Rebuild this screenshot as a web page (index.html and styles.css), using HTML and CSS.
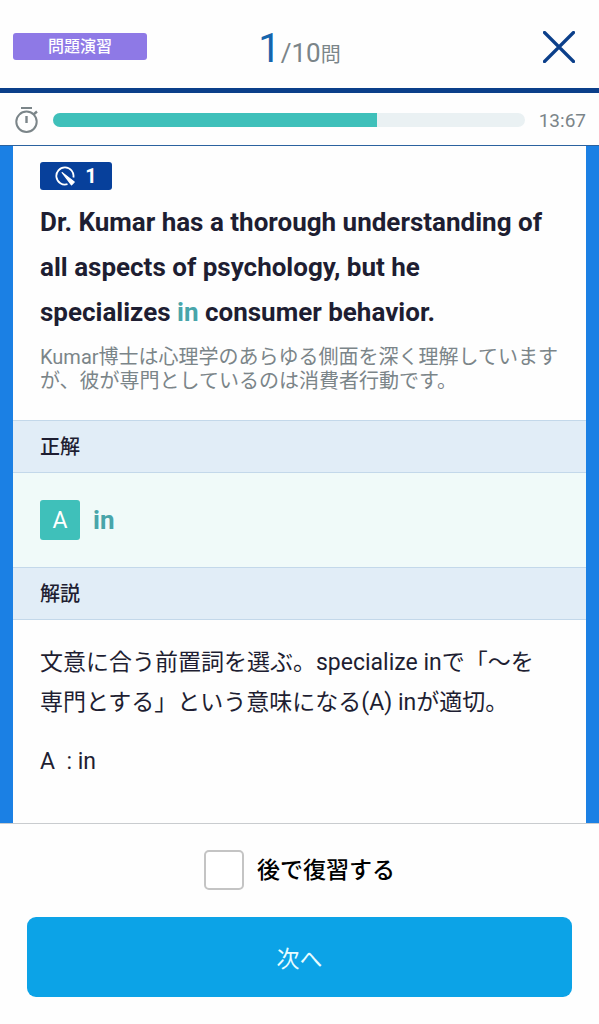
FILE: index.html
```html
<!DOCTYPE html>
<html lang="ja">

<head>
    <meta charset="UTF-8">
    <meta name="viewport" content="width=device-width, initial-scale=1.0">
    <title>問題演習</title>
    <link rel="stylesheet" href="styles.css">
</head>

<body>
    <header class="quiz-header">
        <span class="mode-label">問題演習</span>
        <p class="question-count"><span class="current">1</span>/10<span class="unit">問</span></p>
        <button type="button" class="close-btn" aria-label="閉じる">
            <svg viewBox="0 0 32 32" width="32" height="32">
                <path d="M1.5 1.5L30.5 30.5M30.5 1.5L1.5 30.5" fill="none" stroke="#0b3f8a" stroke-width="3.2" stroke-linecap="round" />
            </svg>
        </button>
    </header>

    <div class="timer">
        <svg class="timer-icon" viewBox="0 0 24 28" width="24" height="28" fill="none" stroke="#7b8589">
            <circle cx="11.5" cy="15.8" r="10.2" stroke-width="2" />
            <path d="M6 2H17" stroke-width="2" />
            <path d="M18.5 8.5L22 5.5" stroke-width="2.4" />
            <path d="M11.5 10V17" stroke-width="2.4" />
        </svg>
        <div class="timer-bar">
            <div class="timer-fill" style="width: 68.6%"></div>
        </div>
        <span class="timer-text">13:67</span>
    </div>

    <main class="quiz-main">
        <section class="question">
            <div class="question-number">
                <svg viewBox="0 0 20 20" width="20" height="20" fill="none" stroke="#fff">
                    <path d="M12.5 18.2A8.6 8.6 0 1 1 18.4 11.5" stroke-width="1.8" />
                    <path d="M7.2 6.6L19.2 16L16.5 18.9Z" fill="#fff" stroke-width="1.2" stroke-linejoin="round" />
                </svg>
                <span>1</span>
            </div>
            <h1 class="question-text">Dr. Kumar has a thorough understanding of all aspects of psychology, but he specializes <span class="highlight">in</span> consumer behavior.</h1>
            <p class="translation">Kumar博士は心理学のあらゆる側面を深く理解していますが、彼が専門としているのは消費者行動です。</p>
        </section>

        <h2 class="section-title">正解</h2>
        <div class="answer">
            <span class="answer-mark">A</span>
            <span class="answer-text">in</span>
        </div>

        <h2 class="section-title">解説</h2>
        <section class="explanation">
            <p>文意に合う前置詞を選ぶ。specialize inで「～を専門とする」という意味になる(A) inが適切。</p>
            <p>A &nbsp;: in</p>
        </section>
    </main>

    <footer class="quiz-footer">
        <label class="review-later">
            <input type="checkbox">
            <span>後で復習する</span>
        </label>
        <button type="button" class="next-btn">次へ</button>
    </footer>
</body>

</html>
```
FILE: styles.css
```css
* {
    box-sizing: border-box;
}

body {
    margin: 0;
    min-height: 100vh;
    display: flex;
    flex-direction: column;
    background: #fefefe;
    color: #1e1e32;
    font-family: Roboto, "Noto Sans CJK JP", sans-serif;
}

h1,
h2,
p {
    margin: 0;
}

/* Header */

.quiz-header {
    display: grid;
    grid-template-columns: 1fr auto 1fr;
    align-items: center;
    height: 93px;
    padding: 5px 13px 0;
    border-bottom: 5px solid #0b3f8a;
}

.mode-label {
    width: 134px;
    height: 27px;
    border-radius: 3px;
    background: #8e79e6;
    color: #fff;
    font-size: 16px;
    font-weight: 500;
    line-height: 27px;
    text-align: center;
}

.question-count {
    padding-top: 10px;
    color: #7b8589;
    font-size: 26px;
    line-height: 48px;
}

.question-count .current {
    color: #1565ad;
    font-size: 40px;
}

.question-count .unit {
    font-size: 20px;
}

.close-btn {
    justify-self: end;
    display: flex;
    margin-right: 11px;
    padding: 0;
    border: none;
    background: none;
    cursor: pointer;
}

/* Timer */

.timer {
    display: flex;
    align-items: center;
    gap: 14px;
    height: 53px;
    padding: 2px 13px 0 15px;
    border-bottom: 1px solid #2b629f;
}

.timer-bar {
    flex: 1;
    height: 14px;
    border-radius: 7px;
    background: #eaf1f3;
    overflow: hidden;
}

.timer-fill {
    height: 100%;
    background: #3fc0ba;
}

.timer-text {
    color: #7b8589;
    font-size: 19px;
}

/* Question card */

.quiz-main {
    flex: 1;
    border: solid #1b80e4;
    border-width: 0 13px;
}

.question {
    padding: 16px 27px 27px;
}

.question-number {
    display: flex;
    align-items: center;
    justify-content: center;
    gap: 10px;
    width: 72px;
    height: 28px;
    border-radius: 3px;
    background: #07409b;
    color: #fff;
    font-size: 20px;
    font-weight: 700;
}

.question-text {
    margin: 10px 0;
    padding-right: 8px;
    font-size: 26px;
    font-weight: 700;
    line-height: 45px;
}

.highlight {
    color: #48a5aa;
}

.translation {
    color: #7b8589;
    font-size: 20px;
    line-height: 24px;
}

.section-title {
    padding: 2px 27px 0;
    border: solid #c3d8ea;
    border-width: 1px 0;
    background: #e1edf7;
    font-size: 20px;
    font-weight: 500;
    line-height: 49px;
}

.answer {
    display: flex;
    align-items: center;
    gap: 13px;
    padding: 27px;
    background: #f0faf9;
}

.answer-mark {
    width: 40px;
    height: 40px;
    border-radius: 3px;
    background: #3fc0ba;
    color: #fff;
    font-size: 23px;
    line-height: 42px;
    text-align: center;
}

.answer-text {
    color: #48a5aa;
    font-size: 26px;
    font-weight: 700;
}

.explanation {
    padding: 23px 40px 24px 27px;
    font-size: 23px;
    line-height: 40px;
}

.explanation p + p {
    margin-top: 19px;
}

/* Footer */

.quiz-footer {
    display: flex;
    flex-direction: column;
    gap: 27px;
    padding: 26px 27px 27px;
    border-top: 1px solid #c9cccf;
}

.review-later {
    display: flex;
    align-items: center;
    justify-content: center;
    gap: 13px;
    color: #000;
    font-size: 23px;
    font-weight: 500;
    line-height: 40px;
    cursor: pointer;
}

.review-later span {
    padding-top: 2px;
    line-height: 38px;
}

.review-later input {
    appearance: none;
    width: 40px;
    height: 40px;
    margin: 0;
    border: 2px solid #c4c4c4;
    border-radius: 5px;
    background: #fff;
    cursor: pointer;
}

.review-later input:checked {
    background: #3fc0ba;
}

.next-btn {
    height: 80px;
    border: none;
    border-radius: 9px;
    background: #0ca3e7;
    color: #e8fdff;
    font-family: inherit;
    font-size: 23px;
    cursor: pointer;
}
```
